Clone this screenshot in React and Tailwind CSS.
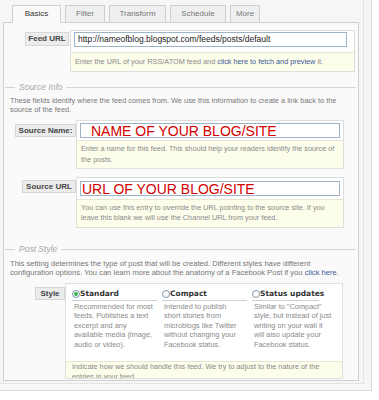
import React from "react";

const tabs = ["Basics", "Filter", "Transform", "Schedule", "More"];
const tabWidths = ["w-[49px]", "w-[40px]", "w-[57px]", "w-[56px]", "w-[30px]"];

const Legend = ({ title, className }) => (
  <div className={"flex items-center h-[10px] " + className}>
    <div className="ml-[1px] w-[10px] h-px bg-[#d4d4d4]" />
    <span className="px-[4px] italic text-[8.5px] leading-[10px] text-[#a8a8a8]">
      {title}
    </span>
    <div className="flex-1 mr-[2px] h-px bg-[#d4d4d4]" />
  </div>
);

const FieldLabel = ({ children, className }) => (
  <div
    className={
      "shrink-0 flex items-center justify-center bg-[#ececec] border border-[#d6d6d6] text-[8px] font-bold text-[#444] " +
      className
    }>
    {children}
  </div>
);

const styles = [
  {
    name: "Standard",
    checked: true,
    w: "w-[85px]",
    lines: [
      "Recommended for most",
      "feeds. Publishes a text",
      "excerpt and any",
      "available media (image,",
      "audio or video).",
    ],
  },
  {
    name: "Compact",
    w: "w-[85px]",
    lines: [
      "Intended to publish",
      "short stories from",
      "microblogs like Twitter",
      "without changing your",
      "Facebook status.",
    ],
  },
  {
    name: "Status updates",
    w: "w-[67px]",
    lines: [
      'Similar to "Compact"',
      "style, but instead of just",
      "writing on your wall it",
      "will also update your",
      "Facebook status.",
    ],
  },
];

export default function App() {
  return (
    <div className="w-[379px] h-[400px] bg-white overflow-hidden font-['Liberation_Sans',sans-serif] text-[#666]">
      <div className="w-[372px] h-[391px] border-r border-b border-[#dcdcdc] bg-[#f6f6f6]">
        <div className="w-[364px] h-[384px] border-r border-b border-[#e4e4e4] pl-[3px] pt-[5px]">
          {/* tabs */}
          <div className="flex gap-[4px] pl-[9px] relative z-10">
            {tabs.map((t, i) => (
              <div
                key={t}
                className={
                  "h-[18px] flex items-center justify-center text-[8px] border border-[#cfcfcf] " +
                  tabWidths[i] +
                  (i === 0
                    ? " bg-[#fafafa] border-b-[#fafafa] text-[#333]"
                    : " h-[17px] bg-[#efefef] text-[#777]")
                }>
                {t}
              </div>
            ))}
          </div>

          {/* panel */}
          <div className="-mt-px w-[356px] h-[359px] border border-[#cfcfcf] bg-[#fafafa] overflow-hidden">
            {/* Feed URL */}
            <div className="flex items-start mt-[7px]">
              <FieldLabel className="ml-[21px] mt-[2px] w-[44px] h-[14px]">Feed URL</FieldLabel>
              <div className="ml-[1px] w-[285px] border border-[#dedede] bg-white">
                <div className="px-[3px] pt-[1px] pb-[5px]">
                  <div className="w-[273px] h-[15px] border border-[#9fb3c6] bg-white flex items-center px-[3px] text-[8.5px] text-[#222]">
                    http://nameofblog.blogspot.com/feeds/posts/default
                  </div>
                </div>
                <div className="h-[19px] border-t border-[#e6e6d0] bg-[#fdfdeb] flex items-center px-[4px] text-[7.3px] text-[#8a8a8a]">
                  Enter the URL of your RSS/ATOM feed and&nbsp;
                  <span className="text-[#3b5998]">click here to fetch and preview</span>
                  &nbsp;it.
                </div>
              </div>
            </div>

            {/* Source Info */}
            <Legend title="Source Info" className="mt-[10px]" />
            <p className="mt-[4px] px-[6px] whitespace-nowrap text-[7.4px] leading-[9px] text-[#777]">
              These fields identify where the feed comes from. We use this information to create a link back to the
              <br />
              source of the feed.
            </p>

            <div className="flex items-start mt-[6px]">
              <FieldLabel className="ml-[11px] mt-[4px] w-[61px] h-[13px]">Source Name:</FieldLabel>
              <div className="w-[268px] border border-[#dedede] bg-white">
                <div className="px-[3px] pt-[2px] pb-[2px]">
                  <div className="h-[15px] border border-[#9fb3c6] bg-white flex items-center pl-[10px] text-[14px] leading-none text-[#d40000]">
                    NAME OF YOUR BLOG/SITE
                  </div>
                </div>
                <div className="h-[28px] border-t border-[#e6e6d0] bg-[#fdfdeb] px-[4px] pt-[3px] whitespace-nowrap text-[7.3px] leading-[10.5px] text-[#8a8a8a]">
                  Enter a name for this feed. This should help your readers identify the source of
                  <br />
                  the posts.
                </div>
              </div>
            </div>

            <div className="flex items-start mt-[8px]">
              <FieldLabel className="ml-[18px] mt-[3px] w-[54px] h-[13px]">Source URL</FieldLabel>
              <div className="w-[268px] border border-[#dedede] bg-white">
                <div className="px-[3px] pt-[3px] pb-[3px]">
                  <div className="h-[15px] border border-[#9fb3c6] bg-white flex items-center pl-[1px] text-[14px] leading-none text-[#d40000]">
                    URL OF YOUR BLOG/SITE
                  </div>
                </div>
                <div className="h-[28px] border-t border-[#e6e6d0] bg-[#fdfdeb] px-[4px] pt-[3px] whitespace-nowrap text-[7.3px] leading-[9.5px] text-[#8a8a8a]">
                  You can use this entry to override the URL pointing to the source site. If you
                  <br />
                  leave this blank we will use the Channel URL from your feed.
                </div>
              </div>
            </div>

            {/* Post Style */}
            <Legend title="Post Style" className="mt-[16px]" />
            <p className="mt-[5px] px-[6px] whitespace-nowrap text-[7.6px] leading-[9px] text-[#777]">
              This setting determines the type of post that will be created. Different styles have different
              <br />
              configuration options. You can learn more about the anatomy of a Facebook Post if you{" "}
              <span className="text-[#3b5998]">click here</span>.
            </p>

            <div className="flex items-start mt-[6px]">
              <FieldLabel className="ml-[31px] mt-[4px] w-[30px] h-[13px]">Style</FieldLabel>
              <div className="w-[278px] border border-[#dedede] bg-white">
                <div className="flex gap-[5px] pl-[6px] pt-[3px] pb-[12px]">
                  {styles.map((s) => (
                    <div key={s.name} className={s.w}>
                      <div className="flex items-center h-[14px] border-b border-[#d0d0d0] font-['DejaVu_Sans',sans-serif] font-bold text-[7.5px] text-[#333] whitespace-nowrap">
                        <span className="w-[8px] h-[8px] shrink-0 rounded-full border border-[#7d96b0] bg-white flex items-center justify-center">
                          {s.checked && (
                            <span className="w-[4px] h-[4px] rounded-full bg-[#3fb34f]" />
                          )}
                        </span>
                        {s.name}
                      </div>
                      <div className="mt-[1px] pl-[2px] text-[7.4px] leading-[9.4px] text-[#8a8a8a] whitespace-nowrap">
                        {s.lines.map((l) => (
                          <div key={l}>{l}</div>
                        ))}
                      </div>
                    </div>
                  ))}
                </div>
                <div className="h-[17px] overflow-hidden border-t border-[#e6e6d0] bg-[#fdfdeb] px-[6px] whitespace-nowrap text-[7.3px] leading-[10px] text-[#8a8a8a]">
                  Indicate how we should handle this feed. We try to adjust to the nature of the
                  <br />
                  entries in your feed.
                </div>
              </div>
            </div>
          </div>
        </div>
      </div>
    </div>
  );
}
